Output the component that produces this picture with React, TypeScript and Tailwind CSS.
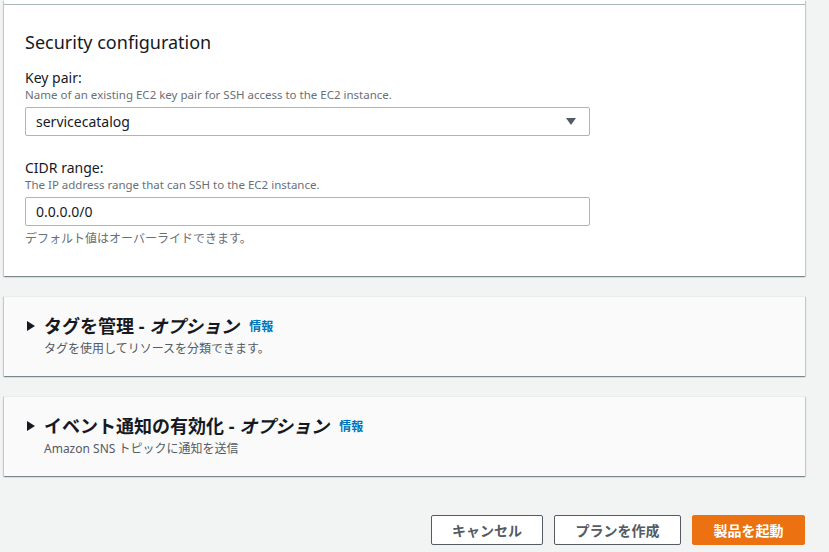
import React from "react";

const font = { fontFamily: '"Noto Sans", "Noto Sans CJK JP", sans-serif' };

function Caret() {
  return (
    <svg width="10" height="8" viewBox="0 0 10 8">
      <path d="M0 0 H10 L5 7 Z" fill="#545b64" />
    </svg>
  );
}

function Tri() {
  return (
    <svg width="8" height="10" viewBox="0 0 8 10">
      <path d="M0 0 L8 5 L0 10 Z" fill="#16191f" />
    </svg>
  );
}

function Expandable({ title, sub }: { title: string; sub: string }) {
  return (
    <div className="bg-[#fafafa] border-t border-[#eaeded] h-[80px] shadow-[0_1px_1px_0_rgba(0,28,36,0.3),1px_1px_1px_0_rgba(0,28,36,0.15),-1px_1px_1px_0_rgba(0,28,36,0.15)] pl-[23px] pt-[16px]">
      <div className="flex items-center">
        <div className="w-[17px] flex items-center"><Tri /></div>
        <span className="text-[18px] font-bold text-[#16191f] leading-[24px]">
          {title} - <span className="italic">オプション</span>
        </span>
        <span className="ml-[10px] text-[12px] font-bold text-[#0073bb] leading-[24px] mt-[2px]">情報</span>
      </div>
      <div className="pl-[17px] text-[12px] text-[#545b64] leading-[18px] mt-[1px]">{sub}</div>
    </div>
  );
}

export default function App() {
  return (
    <div style={font} className="w-[829px] h-[552px] bg-[#f2f3f3] overflow-hidden pl-[4px] pr-[24px]">
      <div className="bg-white pt-[4px] shadow-[0_1px_1px_0_rgba(0,28,36,0.3),1px_1px_1px_0_rgba(0,28,36,0.15),-1px_1px_1px_0_rgba(0,28,36,0.15)] h-[276px]">
        <div className="border-t border-[#aab7b8] pl-[21px] pt-[24px]">
          <div className="text-[18px] text-[#16191f] leading-[26px]">Security configuration</div>
          <div className="mt-[13px] text-[14px] text-[#16191f] leading-[20px]">Key pair:</div>
          <div className="text-[11.5px] text-[#687078] leading-[14px]">Name of an existing EC2 key pair for SSH access to the EC2 instance.</div>
          <div className="mt-[5px] w-[565px] h-[29px] border border-[#aab7b8] rounded-[2px] flex items-center justify-between pl-[10px] pr-[13px]">
            <span className="text-[14px] text-[#16191f]">servicecatalog</span>
            <Caret />
          </div>
          <div className="mt-[22px] text-[14px] text-[#16191f] leading-[20px]">CIDR range:</div>
          <div className="text-[11.5px] text-[#687078] leading-[14px]">The IP address range that can SSH to the EC2 instance.</div>
          <div className="mt-[5px] w-[565px] h-[29px] border border-[#aab7b8] rounded-[2px] flex items-center pl-[10px]">
            <span className="text-[14px] text-[#16191f]">0.0.0.0/0</span>
          </div>
          <div className="mt-[4px] text-[12px] text-[#687078] leading-[18px]">デフォルト値はオーバーライドできます。</div>
        </div>
      </div>
      <div className="mt-[20px]">
        <Expandable title="タグを管理" sub="タグを使用してリソースを分類できます。" />
      </div>
      <div className="mt-[20px]">
        <Expandable title="イベント通知の有効化" sub="Amazon SNS トピックに通知を送信" />
      </div>
      <div className="mt-[39px] flex justify-end gap-[11px]">
        <button className="w-[112px] h-[30px] border border-[#545b64] rounded-[2px] bg-white text-[14px] font-bold text-[#545b64]">キャンセル</button>
        <button className="w-[127px] h-[30px] border border-[#545b64] rounded-[2px] bg-white text-[14px] font-bold text-[#545b64]">プランを作成</button>
        <button className="w-[113px] h-[30px] border border-[#ec7211] rounded-[2px] bg-[#ec7211] text-[14px] font-bold text-white">製品を起動</button>
      </div>
    </div>
  );
}
